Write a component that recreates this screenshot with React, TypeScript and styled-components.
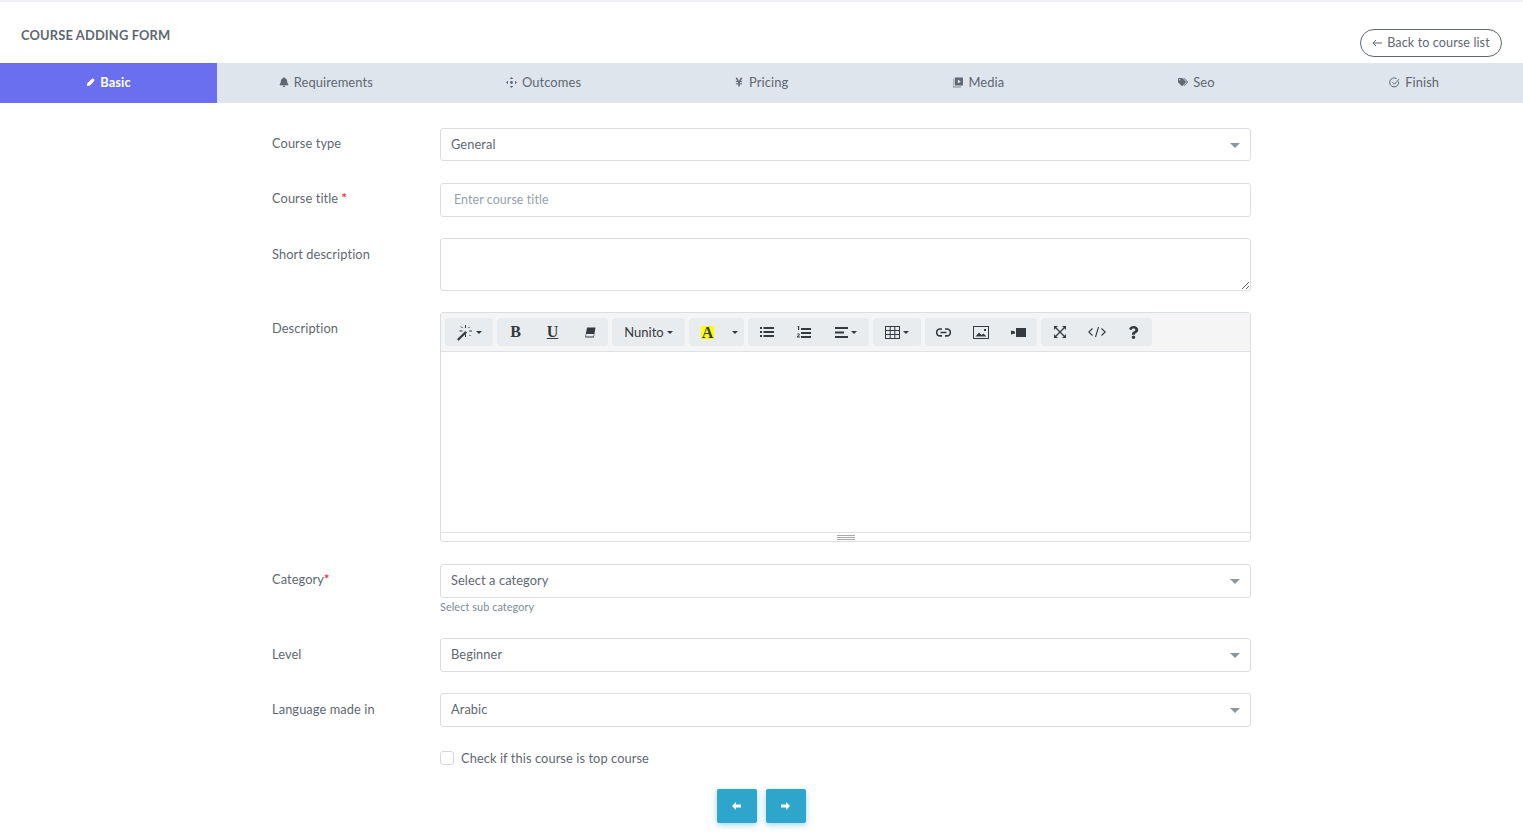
import React from "react";
import styled, { createGlobalStyle } from "styled-components";
import { FaBell, FaYenSign, FaTags, FaQuestion } from "react-icons/fa";

const Global = createGlobalStyle`
  html, body { margin: 0; padding: 0; background: #fff; }
  body { font-family: "Lato", "Noto Sans", sans-serif; color: #6c757d; }
  * { box-sizing: border-box; }
`;
const Page = styled.div`
  width: 1523px; height: 838px; overflow: hidden; background: #fff;
  border-top: 2px solid #eef0f6;
`;
const Header = styled.header`
  height: 61px; padding: 0 21px; display: flex; justify-content: space-between;
`;
const Title = styled.h4`
  margin: 25px 0 0; font-size: 12.9px; line-height: 16px; font-weight: 700; color: #5f6771; letter-spacing: 0.15px;
`;
const BackButton = styled.a`
  margin-top: 27px; height: 28px; width: 142px; border: 1px solid #5f6771; border-radius: 14px;
  display: flex; align-items: center; justify-content: center; gap: 5px; padding-bottom: 1px;
  font-size: 12.6px; color: #5f6771; letter-spacing: 0.1px;
`;
const Tabs = styled.nav`
  height: 40px; display: grid; grid-template-columns: 217px repeat(6, 1fr); background: #dee5ed;
`;
const Tab = styled.div<{ $active?: boolean }>`
  display: flex; align-items: center; justify-content: center; gap: 5px; padding-bottom: 2px;
  font-size: 12.9px; letter-spacing: 0.1px; font-weight: ${p => (p.$active ? 700 : 400)};
  background: ${p => (p.$active ? "#6a6ff0" : "transparent")};
  color: ${p => (p.$active ? "#fff" : "#5f6771")};
`;
const Form = styled.form`
  width: 979px; margin: 25px 0 0 272px; display: flex; flex-direction: column;
`;
const Row = styled.div<{ $mb?: number }>`
  display: grid; grid-template-columns: 168px 811px; margin-bottom: ${p => p.$mb ?? 22}px;
`;
const Label = styled.label<{ $top?: number }>`
  padding-top: ${p => p.$top ?? 6}px; font-size: 12.8px; line-height: 18px; color: #5f6771; letter-spacing: 0.1px;
`;
const Star = styled.span` color: #f1303c; font-weight: 700; `;
const SelectBox = styled.div<{ $h?: number }>`
  position: relative; height: ${p => p.$h ?? 34}px; border: 1px solid #d9dee4; border-radius: 3px;
  display: flex; align-items: center; padding: 0 0 ${p => (p.$h ? 1 : 3)}px 10px; font-size: 12.8px; color: #5f6771; letter-spacing: 0.1px;
  &::after {
    content: ""; position: absolute; right: 10px; top: 50%; margin-top: -2px;
    border-left: 5.5px solid transparent; border-right: 5.5px solid transparent; border-top: 5.5px solid #8a97a2;
  }
`;
const TextInput = styled.input`
  display: block; width: 100%; height: 34px; border: 1px solid #d9dee4; border-radius: 3px; padding: 0 13px 2px;
  font: 12.4px "Lato", sans-serif; letter-spacing: 0.1px; color: #5f6771; outline: none;
  &::placeholder { color: #98a1a9; opacity: 1; }
`;
const TextArea = styled.textarea`
  display: block; width: 100%; height: 53px; border: 1px solid #d9dee4; border-radius: 3px; outline: none;
`;
const Editor = styled.div`
  height: 230px; border: 1px solid #d9dee4; border-radius: 3px; display: flex; flex-direction: column;
`;
const Toolbar = styled.div`
  height: 39px; flex: none; background: #f5f5f5; border-bottom: 1px solid #dee2e6; padding: 5px 0 0 4px; display: flex; gap: 4px;
  align-items: flex-start;
`;
const Group = styled.div`
  display: flex; height: 28px; background: #e9ecef; border-radius: 3px;
`;
const ToolButton = styled.span<{ $w?: number }>`
  width: ${p => p.$w ?? 37}px; height: 28px; display: flex; align-items: center; justify-content: center; gap: 3px;
  color: #343a40; font-size: 13px;
`;
const Caret = styled.i`
  display: block; border-left: 3px solid transparent; border-right: 3px solid transparent; border-top: 3px solid #343a40;
`;
const SerifGlyph = styled.span<{ $underline?: boolean }>`
  font: 700 16px/16px "Liberation Serif", serif; color: #343a40;
  text-decoration: ${p => (p.$underline ? "underline" : "none")};
`;
const Highlight = styled.span`
  display: block; background: #ffff00; font: 700 16px/13px "Liberation Serif", serif; color: #343a40; padding: 0 1px; height: 13px;
`;
const EditArea = styled.div` flex: 1; `;
const Resize = styled.div`
  height: 9px; flex: none; border-top: 1px solid #dee2e6; display: flex; flex-direction: column; align-items: center; justify-content: center; gap: 1px;
  i { display: block; width: 18px; height: 1px; background: #a9a9a9; }
`;
const Help = styled.small`
  display: block; margin-top: 2px; font-size: 10.8px; line-height: 14px; color: #7b8a97; letter-spacing: 0.1px;
`;
const CheckRow = styled.label`
  margin-left: 168px; display: flex; align-items: center; gap: 7px; height: 18px;
  font-size: 12.8px; color: #5f6771; letter-spacing: 0.1px;
`;
const CheckBox = styled.span`
  width: 14px; height: 14px; border: 1px solid #d3d9df; border-radius: 3px;
`;
const Actions = styled.div`
  display: flex; justify-content: center; gap: 9px; margin: 22px 0 0 194px; width: 590px;
`;
const NavButton = styled.button`
  width: 40px; height: 34px; border: 0; border-radius: 2px; background: #2ea6cb; color: #fff;
  display: flex; align-items: center; justify-content: center; padding: 0;
  box-shadow: 0 2px 6px rgba(46,166,203,.45);
`;
const Font = styled.span` font-size: 13px; color: #343a40; `;

/* tab icons */
const PenIcon = () => (
  <svg width="9" height="9" viewBox="0 0 10 10" fill="currentColor"><path d="M1 9l.6-3.4L6.4 1c.8-.6 2-.4 2.6.4.5.7.4 1.6-.2 2.2L4.4 8.4z" /></svg>
);
const MoveIcon = () => (
  <svg width="11" height="11" viewBox="0 0 10 10" fill="currentColor">
    <path d="M5 0l1.6 1.8H3.4zM5 10L3.4 8.2h3.2zM0 5l1.8-1.6v3.2zM10 5L8.2 6.6V3.4z" /><circle cx="5" cy="5" r="1.3" />
  </svg>
);
const MediaIcon = () => (
  <svg width="10" height="11" viewBox="0 0 10 11">
    <path d="M0 2v8h8" fill="none" stroke="currentColor" strokeWidth="1" opacity=".75" />
    <rect x="1.8" y="0.5" width="8.2" height="8" fill="currentColor" />
    <path d="M4.8 2.6l3 1.9-3 1.9z" fill="#dee5ed" />
  </svg>
);
const CheckCircleIcon = () => (
  <svg width="11" height="11" viewBox="0 0 11 11" fill="none" stroke="currentColor" strokeWidth="1">
    <path d="M9.6 4.6A4.5 4.5 0 1 1 7.6 1.6" /><path d="M3.5 5.2l2 2L10 2.2" />
  </svg>
);
const ThinArrow = () => (
  <svg width="10" height="8" viewBox="0 0 10 8" fill="none" stroke="currentColor" strokeWidth="1"><path d="M10 4H1M4 1L1 4l3 3" /></svg>
);
const BlockArrow = ({ flip }: { flip?: boolean }) => (
  <svg width="9" height="8" viewBox="0 0 9 8" fill="#fff" style={flip ? { transform: "scaleX(-1)" } : undefined}>
    <path d="M0 4l4-4v2.4h5v3.2H4V8z" />
  </svg>
);
/* toolbar icons */
const WandIcon = () => (
  <svg width="17" height="17" viewBox="0 0 17 17">
    <path d="M1 15.2L9.4 7l1.6 1.6-8.4 8.2z" fill="#343a40" />
    <path d="M9.5 1v3M9.5 10v3M3.5 7h3M13 7h3M5 2.5l1.5 1.5M13.5 11l1 1M13.5 3l-1 1" stroke="#343a40" strokeWidth="1" />
  </svg>
);
const EraserIcon = () => (
  <svg width="12" height="11" viewBox="0 0 12 11">
    <path d="M3 .5h8.5L9.8 10.5H1.2z" fill="#343a40" />
    <path d="M2.3 7h7.6l-.6 2.6H2z" fill="#e9ecef" />
  </svg>
);
const UlIcon = () => (
  <svg width="14" height="12" viewBox="0 0 14 12" fill="#343a40">
    <rect x="0" y="1" width="2" height="2" /><rect x="0" y="5" width="2" height="2" /><rect x="0" y="9" width="2" height="2" />
    <rect x="3.5" y="1" width="10.5" height="2" /><rect x="3.5" y="5" width="10.5" height="2" /><rect x="3.5" y="9" width="10.5" height="2" />
  </svg>
);
const OlIcon = () => (
  <svg width="14" height="13" viewBox="0 0 14 13" fill="#343a40">
    <path d="M1 0h1.2v4H1V1H.4zM0 8.2c.3-.8 2.8-1 2.8.4 0 .8-1 1.3-1.5 1.9h1.6V11.5H0v-.9c.6-.8 1.7-1.4 1.7-2 0-.5-.8-.3-1.1 0z" />
    <rect x="4" y="2" width="10" height="2" /><rect x="4" y="6" width="10" height="2" /><rect x="4" y="10" width="10" height="2" />
  </svg>
);
const AlignIcon = () => (
  <svg width="13" height="11" viewBox="0 0 13 11" fill="#343a40">
    <rect y="0" width="13" height="2" /><rect y="4.5" width="9" height="2" /><rect y="9" width="13" height="2" />
  </svg>
);
const TableIcon = () => (
  <svg width="15" height="13" viewBox="0 0 15 13" fill="none" stroke="#343a40" strokeWidth="1">
    <rect x=".5" y=".5" width="14" height="12" /><path d="M5.2 0v13M9.8 0v13M0 4.5h15M0 8.5h15" />
  </svg>
);
const LinkIcon = () => (
  <svg width="15" height="9" viewBox="0 0 15 9" fill="none" stroke="#343a40" strokeWidth="1.7">
    <path d="M6 1H4a3.2 3.2 0 0 0 0 6.8h2M9 1h2a3.2 3.2 0 0 1 0 6.8H9M4.5 4.5h6" />
  </svg>
);
const PictureIcon = () => (
  <svg width="16" height="13" viewBox="0 0 16 13">
    <rect x=".5" y=".5" width="15" height="12" fill="none" stroke="#343a40" />
    <path d="M2.5 10.5l3.5-4 2.5 2.5 2-1.5 3 3z" fill="#343a40" /><rect x="11" y="3" width="2" height="2" fill="#343a40" />
  </svg>
);
const VideoIcon = () => (
  <svg width="15" height="9" viewBox="0 0 15 9" fill="#343a40">
    <rect x="5" y="0" width="10" height="9" /><path d="M0 2.5l4 1v2l-4 1z" />
  </svg>
);
const ExpandIcon = () => (
  <svg width="12" height="12" viewBox="0 0 12 12">
    <path d="M2 2l8 8M10 2l-8 8" stroke="#343a40" strokeWidth="1.2" />
    <path d="M0 0h4L0 4zM12 0v4L8 0zM0 12V8l4 4zM12 12H8l4-4z" fill="#343a40" />
  </svg>
);
const CodeIcon = () => (
  <svg width="18" height="10" viewBox="0 0 18 10" fill="none" stroke="#343a40" strokeWidth="1.1">
    <path d="M4.5 1.5L.8 5l3.7 3.5M13.5 1.5L17.2 5l-3.7 3.5M10.5 0L7.5 10" />
  </svg>
);

const tabs: [React.ReactNode, string][] = [
  [<PenIcon />, "Basic"], [<FaBell size={10} />, "Requirements"], [<MoveIcon />, "Outcomes"], [<FaYenSign size={10} />, "Pricing"],
  [<MediaIcon />, "Media"], [<FaTags size={10} />, "Seo"], [<CheckCircleIcon />, "Finish"],
];

export default function App() {
  return (
    <Page>
      <Global />
      <Header>
        <Title>COURSE ADDING FORM</Title>
        <BackButton><ThinArrow /> Back to course list</BackButton>
      </Header>
      <Tabs>
        {tabs.map(([icon, name], i) => <Tab key={name} $active={i === 0}>{icon}{name}</Tab>)}
      </Tabs>
      <Form>
        <Row><Label>Course type</Label><SelectBox $h={33}>General</SelectBox></Row>
        <Row $mb={21}><Label>Course title <Star>*</Star></Label><TextInput placeholder="Enter course title" /></Row>
        <Row $mb={21}><Label $top={7}>Short description</Label><TextArea /></Row>
        <Row><Label $top={7}>Description</Label>
          <Editor>
            <Toolbar>
              <Group><ToolButton $w={48}><WandIcon /><Caret /></ToolButton></Group>
              <Group>
                <ToolButton><SerifGlyph>B</SerifGlyph></ToolButton>
                <ToolButton><SerifGlyph $underline>U</SerifGlyph></ToolButton>
                <ToolButton><EraserIcon /></ToolButton>
              </Group>
              <Group><ToolButton $w={73}><Font>Nunito</Font><Caret /></ToolButton></Group>
              <Group>
                <ToolButton $w={37}><Highlight>A</Highlight></ToolButton>
                <ToolButton $w={18}><Caret /></ToolButton>
              </Group>
              <Group>
                <ToolButton><UlIcon /></ToolButton>
                <ToolButton><OlIcon /></ToolButton>
                <ToolButton $w={47}><AlignIcon /><Caret /></ToolButton>
              </Group>
              <Group><ToolButton $w={48}><TableIcon /><Caret /></ToolButton></Group>
              <Group>
                <ToolButton><LinkIcon /></ToolButton>
                <ToolButton><PictureIcon /></ToolButton>
                <ToolButton $w={38}><VideoIcon /></ToolButton>
              </Group>
              <Group>
                <ToolButton><ExpandIcon /></ToolButton>
                <ToolButton><CodeIcon /></ToolButton>
                <ToolButton><FaQuestion size={13} /></ToolButton>
              </Group>
            </Toolbar>
            <EditArea />
            <Resize><i /><i /><i /></Resize>
          </Editor>
        </Row>
        <Row $mb={24}><Label>Category<Star>*</Star></Label>
          <div><SelectBox>Select a category</SelectBox><Help>Select sub category</Help></div>
        </Row>
        <Row $mb={21}><Label $top={7}>Level</Label><SelectBox>Beginner</SelectBox></Row>
        <Row><Label $top={7}>Language made in</Label><SelectBox>Arabic</SelectBox></Row>
        <CheckRow><CheckBox />Check if this course is top course</CheckRow>
        <Actions>
          <NavButton type="button"><BlockArrow /></NavButton>
          <NavButton type="button"><BlockArrow flip /></NavButton>
        </Actions>
      </Form>
    </Page>
  );
}
